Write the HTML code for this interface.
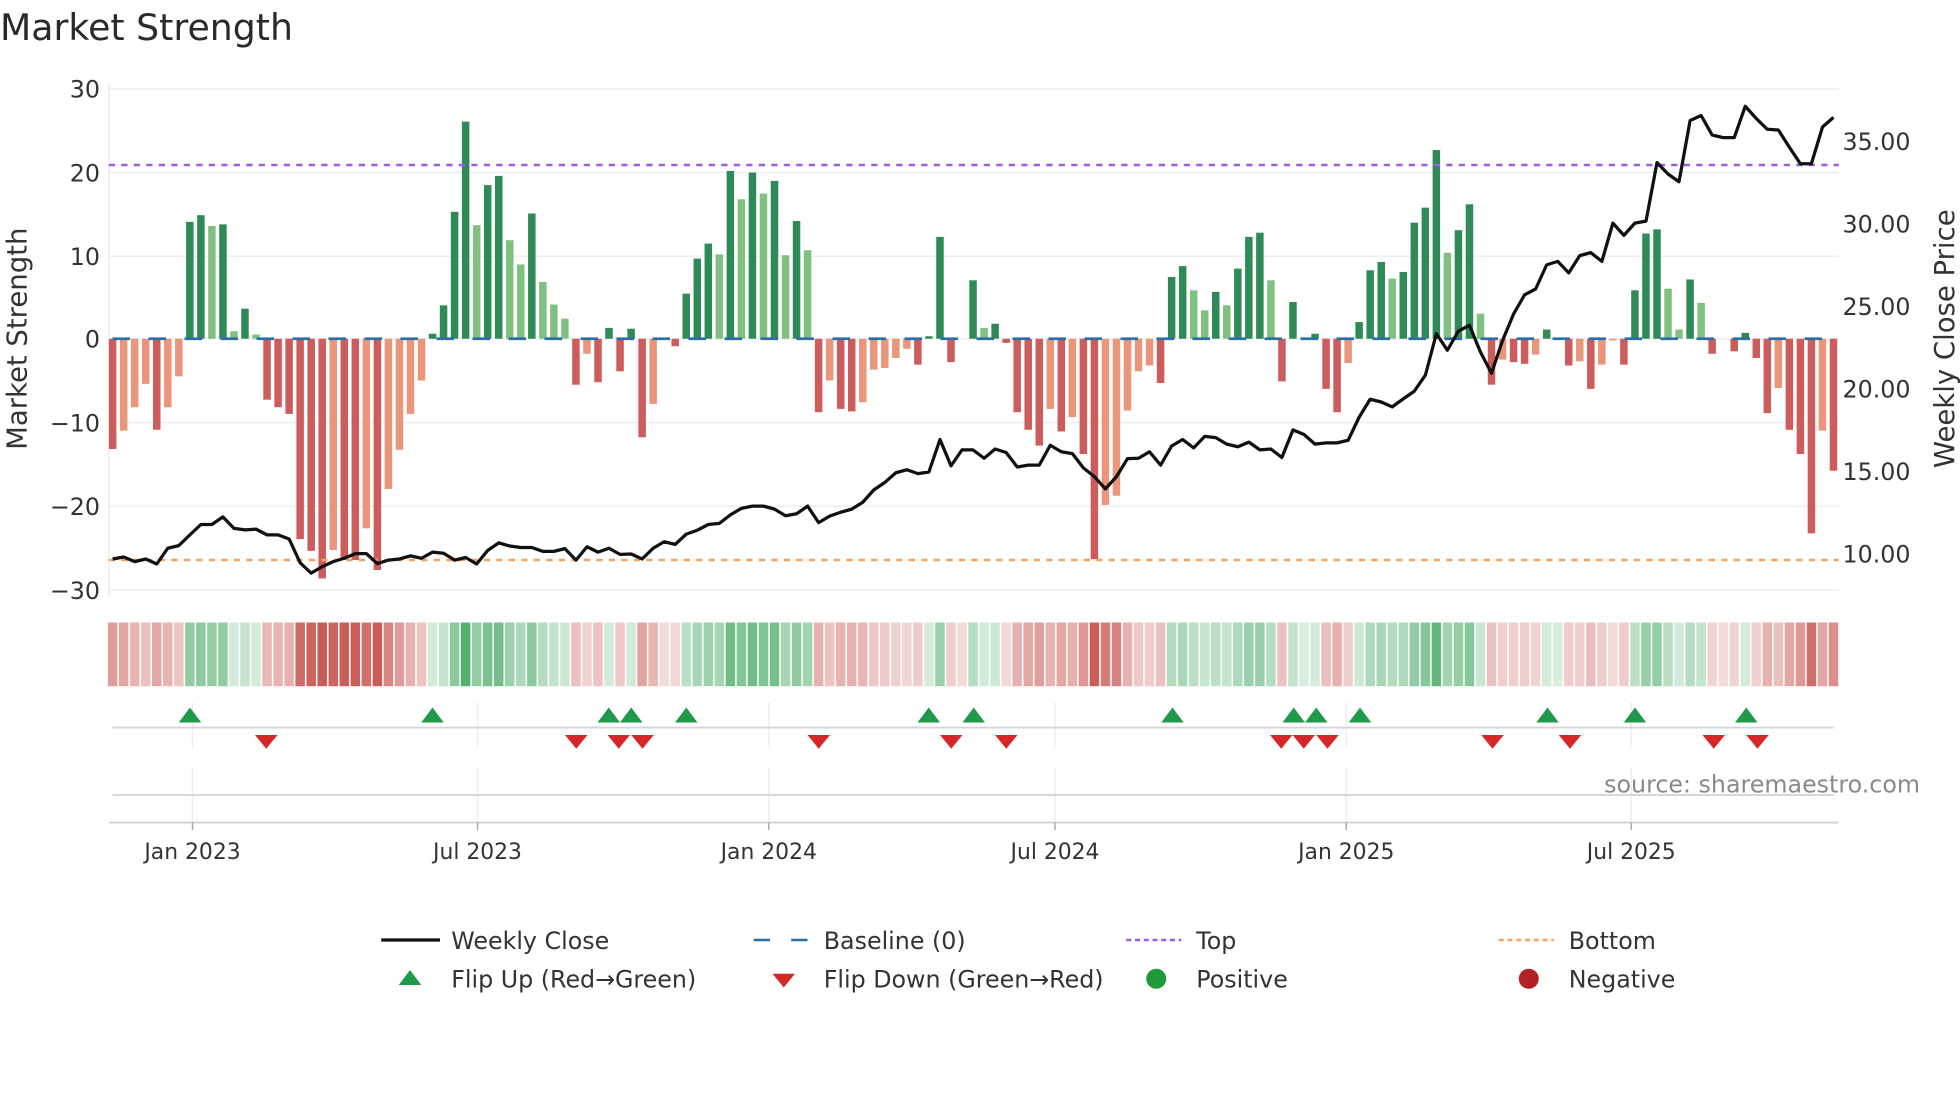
<!DOCTYPE html>
<html><head><meta charset="utf-8">
<style>
html,body{margin:0;padding:0;background:#fff;}
svg{display:block;font-family:"DejaVu Sans","Liberation Sans",sans-serif;}
</style></head>
<body>
<svg id="c" width="1960" height="1102" viewBox="0 0 1568 881.6" xmlns="http://www.w3.org/2000/svg">
<rect width="1568" height="882" fill="#fff"/>
<text x="0" y="32" font-size="29" fill="#2a2a2a">Market Strength</text>
<g stroke="#eceef3" stroke-width="1.2">
<line x1="87" x2="1471" y1="71" y2="71"/><line x1="87" x2="1471" y1="138" y2="138"/>
<line x1="87" x2="1471" y1="205" y2="205"/><line x1="87" x2="1471" y1="271" y2="271"/>
<line x1="87" x2="1471" y1="338" y2="338"/><line x1="87" x2="1471" y1="405" y2="405"/>
<line x1="87" x2="1471" y1="472" y2="472"/>
<line x1="87" x2="87" y1="66" y2="478"/>
</g>
<g font-size="19" fill="#333" text-anchor="end">
<text x="80" y="78">30</text><text x="80" y="145">20</text><text x="80" y="212">10</text>
<text x="80" y="278">0</text><text x="80" y="345">−10</text><text x="80" y="412">−20</text><text x="80" y="479">−30</text>
</g>
<g font-size="19" fill="#333">
<text x="1474" y="120">35.00</text><text x="1474" y="186">30.00</text><text x="1474" y="252">25.00</text>
<text x="1474" y="318">20.00</text><text x="1474" y="384">15.00</text><text x="1474" y="450">10.00</text>
</g>
<text transform="translate(21,271) rotate(-90)" text-anchor="middle" font-size="22" fill="#333">Market Strength</text>
<text transform="translate(1563,271) rotate(-90)" text-anchor="middle" font-size="22" fill="#333">Weekly Close Price</text>
<g id="bars"></g>
<line x1="87" x2="1471" y1="132" y2="132" stroke="#9b5de5" stroke-width="2" stroke-dasharray="5 5"/>
<line x1="87" x2="1471" y1="448" y2="448" stroke="#f4a261" stroke-width="2" stroke-dasharray="5 5"/>
<line x1="90" x2="1471" y1="271" y2="271" stroke="#2a6fa8" stroke-width="2.2" stroke-dasharray="14 14.8"/>
<polyline id="price" fill="none" stroke="#111" stroke-width="2.6" stroke-linejoin="round"/>
<g id="heat"></g>
<g stroke="#eceef3" stroke-width="1.2">
<line x1="154" x2="154" y1="562" y2="598"/><line x1="382" x2="382" y1="562" y2="598"/>
<line x1="615" x2="615" y1="562" y2="598"/><line x1="844" x2="844" y1="562" y2="598"/>
<line x1="1077" x2="1077" y1="562" y2="598"/><line x1="1305" x2="1305" y1="562" y2="598"/>
<line x1="154" x2="154" y1="614" y2="658"/><line x1="382" x2="382" y1="614" y2="658"/>
<line x1="615" x2="615" y1="614" y2="658"/><line x1="844" x2="844" y1="614" y2="658"/>
<line x1="1077" x2="1077" y1="614" y2="658"/><line x1="1305" x2="1305" y1="614" y2="658"/>
</g>
<line x1="90" x2="1467" y1="582" y2="582" stroke="#d5d5d8" stroke-width="1.5"/>
<line x1="90" x2="1467" y1="636" y2="636" stroke="#d5d5d8" stroke-width="1.5"/>
<line x1="87" x2="1471" y1="658" y2="658" stroke="#cfd0d4" stroke-width="1.5"/>
<g stroke="#aaa" stroke-width="1.2">
<line x1="154" x2="154" y1="658" y2="664"/><line x1="382" x2="382" y1="658" y2="664"/>
<line x1="615" x2="615" y1="658" y2="664"/><line x1="844" x2="844" y1="658" y2="664"/>
<line x1="1077" x2="1077" y1="658" y2="664"/><line x1="1305" x2="1305" y1="658" y2="664"/>
</g>
<g id="flips"></g>
<text x="1536" y="634" text-anchor="end" font-size="19" fill="#8a8a8a">source: sharemaestro.com</text>
<g font-size="17.5" fill="#333" text-anchor="middle">
<text x="154" y="687">Jan 2023</text><text x="382" y="687">Jul 2023</text><text x="615" y="687">Jan 2024</text>
<text x="844" y="687">Jul 2024</text><text x="1077" y="687">Jan 2025</text><text x="1305" y="687">Jul 2025</text>
</g>
<g font-size="19" fill="#333">
<line x1="305" x2="352" y1="752" y2="752" stroke="#111" stroke-width="2.6"/>
<text x="361" y="759">Weekly Close</text>
<line x1="603" x2="647" y1="752" y2="752" stroke="#2a6fa8" stroke-width="2" stroke-dasharray="13 17"/>
<text x="659" y="759">Baseline (0)</text>
<line x1="901" x2="945" y1="752" y2="752" stroke="#9b5de5" stroke-width="2" stroke-dasharray="4 3"/>
<text x="957" y="759">Top</text>
<line x1="1199" x2="1243" y1="752" y2="752" stroke="#f4a261" stroke-width="2" stroke-dasharray="4 3"/>
<text x="1255" y="759">Bottom</text>
<polygon points="319,788 337,788 328,776" fill="#1f9a4b"/>
<text x="361" y="790">Flip Up (Red→Green)</text>
<polygon points="618,779 636,779 627,790" fill="#d62728"/>
<text x="659" y="790">Flip Down (Green→Red)</text>
<circle cx="925" cy="783" r="8" fill="#1f9a3a"/>
<text x="957" y="790">Positive</text>
<circle cx="1223" cy="783" r="8" fill="#b22222"/>
<text x="1255" y="790">Negative</text>
</g>
</svg>
<script>
(function(){
var NS="http://www.w3.org/2000/svg";
var B=["-13.2d","-11l","-8.2l","-5.4l","-10.9d","-8.2l","-4.5l","14d","14.8d","13.5l","13.7d","0.9l","3.6d","0.5l","-7.3d","-8.2d","-9d","-24d","-25.4d","-28.7d","-25.3l","-26.5d","-26.5d","-22.7l","-27.7d","-18l","-13.3l","-9l","-5l","0.6d","4d","15.2d","26d","13.6l","18.4d","19.5d","11.8l","8.9l","15d","6.8l","4.1l","2.4l","-5.5d",
"-1.8l","-5.2d","1.3d","-3.9d","1.2d","-11.8d","-7.8l","0d","-0.9d","5.4d","9.6d","11.4d","10.1l","20.1d","16.7l","19.9d","17.4l","18.9d","10l","14.1d","10.6l","-8.8d","-5l","-8.4d","-8.7d","-7.6l","-3.7l","-3.5l","-2.3l","-1.2l","-3.1d","0.3d","12.2d","-2.8d","0d","7d","1.3l","1.8d","-0.5d","-8.8d","-10.9d","-12.8d",
"-8.4l","-11.1d","-9.4l","-13.8d","-26.4d","-19.9l","-18.8l","-8.6l","-3.9l","-3.2l","-5.3d","7.4d","8.7d","5.8l","3.4l","5.6d","4l","8.4d","12.2d","12.7d","7l","-5.1d","4.4d","0d","0.6d","-6d","-8.8d","-2.9l","2d","8.2d","9.2d","7.2l","8d","13.9d","15.7d","22.6d","10.3l","13d","16.1d","3l","-5.5d",
"-2.5l","-2.8d","-3d","-1.9l","1.1d","0d","-3.2d","-2.7l","-6d","-3.1l","-0.2l","-3.1d","5.8d","12.6d","13.1d","6l","1.1l","7.1d","4.3l","-1.8d","0d","-1.5d","0.7d","-2.3d","-8.9d","-5.9l","-10.9d","-13.8d","-23.3d","-11l","-15.8d"];
var P=[1200,1195,1207,1200,1213,1172,1165,1137,1110,1110,1090,1120,1124,1122,1137,1137,1148,1210,1237,1220,1207,1198,1186,1186,1212,1203,1200,1192,1198,1182,1185,1203,1196,1213,1178,1158,1166,1170,1170,1180,1180,1173,1203,
1168,1182,1172,1188,1187,1200,1172,1155,1162,1135,1125,1110,1107,1085,1068,1062,1062,1070,1087,1082,1062,1105,1088,1078,1070,1052,1020,1000,975,967,977,973,888,957,915,915,937,913,922,960,955,955,
903,920,925,962,985,1017,985,938,937,920,955,905,888,910,880,883,900,907,895,915,913,935,863,875,900,897,897,890,830,783,790,803,782,762,720,612,655,605,590,660,715,
630,560,510,495,432,423,453,408,400,423,323,355,323,318,165,195,215,55,42,93,100,100,18,50,78,80,125,168,168,72,47];
var x0=90.1,dx=8.825,u=6.68,zero=271;
var bars=document.getElementById('bars'),heat=document.getElementById('heat');
var last=-1;
for(var i=0;i<B.length;i++){
 var s=B[i],t=s.slice(-1),v=parseFloat(s);
 var cx=x0+i*dx;
 if(v!==0){
  var r=document.createElementNS(NS,'rect');
  var h=Math.abs(v)*u;
  r.setAttribute('x',cx-3);r.setAttribute('width',6);
  r.setAttribute('y',v>0?zero-h:zero);r.setAttribute('height',h);
  r.setAttribute('fill',v>0?(t=='d'?'#2e8b57':'#80c080'):(t=='d'?'#cd5c5c':'#e9967a'));
  bars.appendChild(r);
 }
 var sg=v>0?1:(v<0?-1:last); if(v!==0)last=sg;
 var a=0.2+0.7*Math.min(Math.abs(v)/27,1);
 var c=document.createElementNS(NS,'rect');
 c.setAttribute('x',cx-3.8);c.setAttribute('width',7.6);c.setAttribute('y',498);c.setAttribute('height',51);
 c.setAttribute('fill',sg>0?'#3aa45a':'#c44a44');c.setAttribute('fill-opacity',a.toFixed(2));
 heat.appendChild(c);
}
var pts=[];
for(var j=0;j<P.length;j++){pts.push((x0+j*dx).toFixed(1)+','+(271-(625-P[j])*0.3064).toFixed(1));}
document.getElementById('price').setAttribute('points',pts.join(' '));
var up=[152,346,487,505,549,743,779,938,1035,1053,1088,1238,1308,1397];
var dn=[213,461,495,514,655,761,805,1025,1043,1062,1194,1256,1371,1406];
var f=document.getElementById('flips');
up.forEach(function(x){var p=document.createElementNS(NS,'polygon');p.setAttribute('points',(x-9)+',578 '+(x+9)+',578 '+x+',566');p.setAttribute('fill','#1f9a4b');f.appendChild(p);});
dn.forEach(function(x){var p=document.createElementNS(NS,'polygon');p.setAttribute('points',(x-9)+',588 '+(x+9)+',588 '+x+',599');p.setAttribute('fill','#d62728');f.appendChild(p);});
})();
</script>
</body></html>
